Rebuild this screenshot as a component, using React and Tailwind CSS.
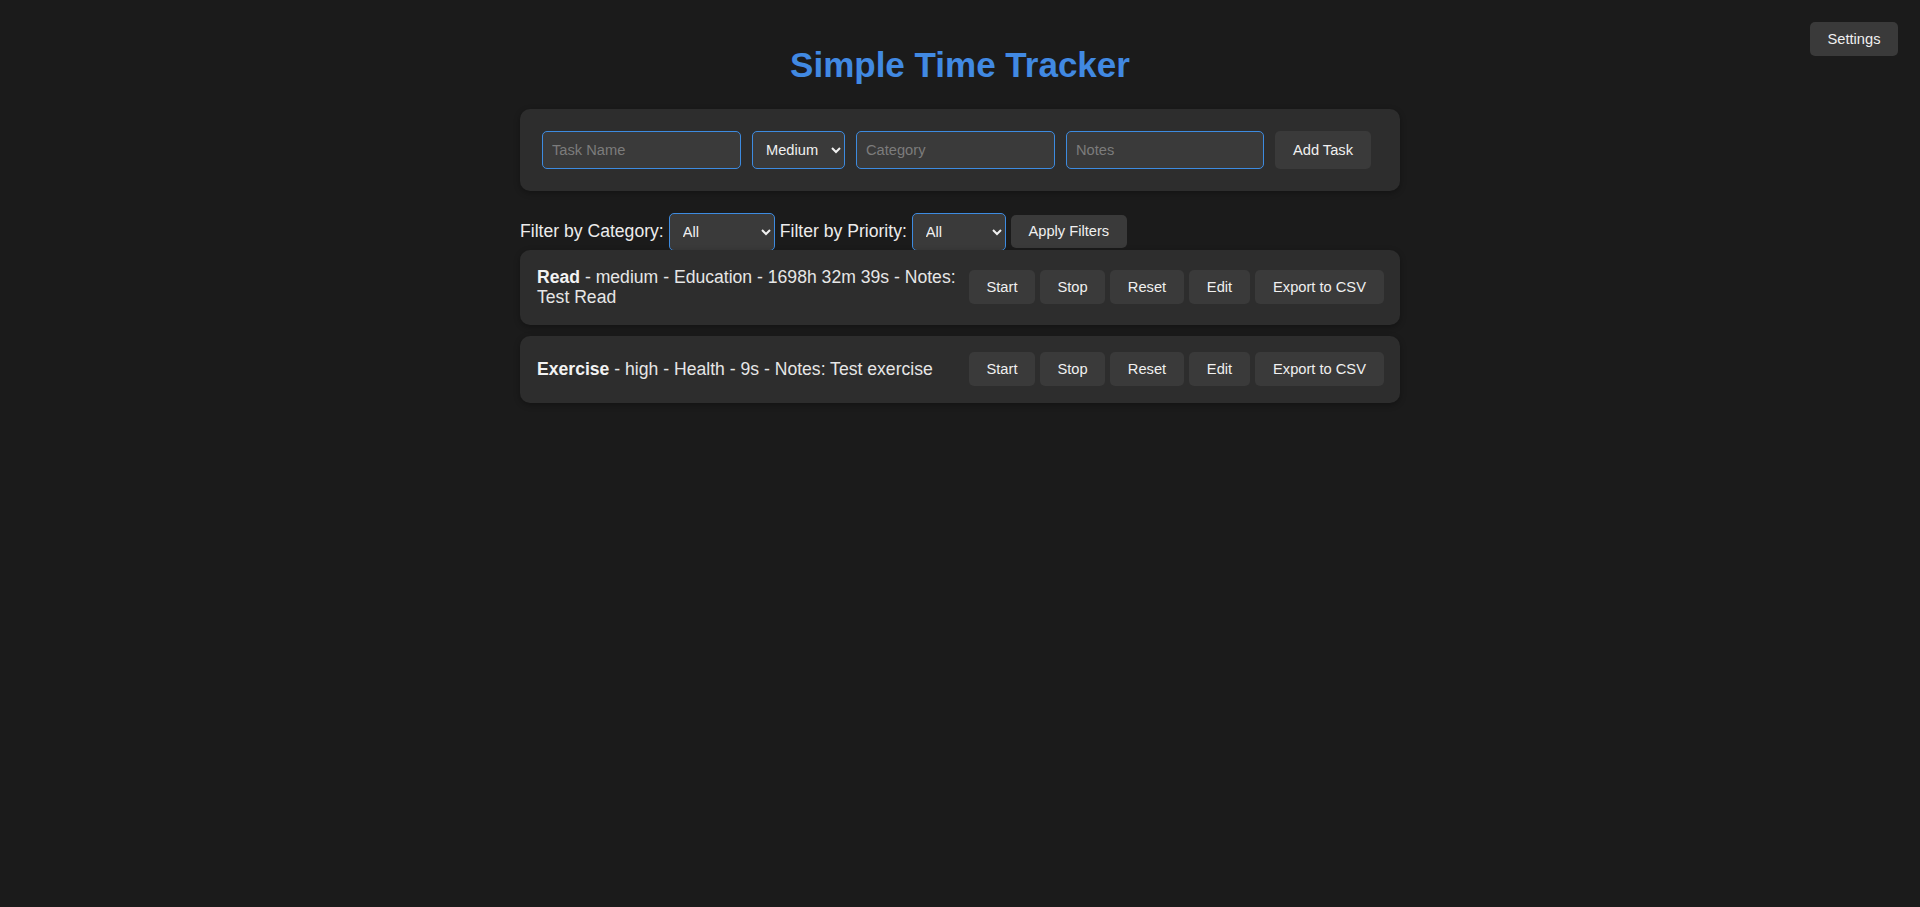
import React, { useState } from "react";

const tasks = [
  { name: "Read", priority: "medium", category: "Education", time: "1698h 32m 39s", notes: "Test Read" },
  { name: "Exercise", priority: "high", category: "Health", time: "9s", notes: "Test exercise" },
];

const btn =
  "bg-[#3a3a3a] text-[#f0f0f0] rounded-[5px] text-[14.67px] leading-none text-center cursor-pointer shrink-0 hover:bg-[#454545]";

const field =
  "h-[38px] bg-[#3a3a3a] text-[#f0f0f0] border border-[#3d8be0] rounded-[5px] px-[9px] text-[14.67px] outline-none placeholder:text-[#7c7c7c]";

const App = () => {
  const [priority, setPriority] = useState("medium");

  return (
    <div className="relative min-h-screen bg-[#1b1b1b] text-[#e6e6e6] font-['Liberation_Sans',Arial,sans-serif]">
      <button className={`${btn} absolute top-[22px] right-[22px] h-[34px] w-[88px]`}>Settings</button>

      <div className="w-[880px] mx-auto pt-[45px]">
        <h1 className="text-center text-[35px] leading-[40px] font-bold text-[#4189e2] mb-[24px]">
          Simple Time Tracker
        </h1>

        <div className="flex gap-[11px] bg-[#2d2d2d] rounded-[10px] p-[22px] shadow-[0_2px_6px_rgba(0,0,0,0.3)]">
          <input className={`${field} w-[199px]`} placeholder="Task Name" />
          <select
            value={priority}
            onChange={(e) => setPriority(e.target.value)}
            className={`${field} w-[93px]`}
          >
            <option value="low">Low</option>
            <option value="medium">Medium</option>
            <option value="high">High</option>
          </select>
          <input className={`${field} w-[199px]`} placeholder="Category" />
          <input className={`${field} w-[198px]`} placeholder="Notes" />
          <button className={`${btn} h-[38px] w-[96px]`}>Add Task</button>
        </div>

        <div className="mt-[22px] h-[37px] flex items-center gap-[5px] text-[17.6px] text-[#ececec]">
          <span>Filter by Category:</span>
          <select className={`${field} h-[37px] w-[106px]`}>
            <option>All</option>
            <option>Education</option>
            <option>Health</option>
          </select>
          <span>Filter by Priority:</span>
          <select className={`${field} h-[37px] w-[94px]`}>
            <option>All</option>
            <option>Low</option>
            <option>Medium</option>
            <option>High</option>
          </select>
          <button className={`${btn} h-[33px] w-[116px]`}>Apply Filters</button>
        </div>

        <div className="flex flex-col gap-[11px]">
          {tasks.map((t) => (
            <div
              key={t.name}
              className="flex items-center bg-[#2d2d2d] rounded-[10px] pl-[17px] pr-[16px] py-[16.5px] shadow-[0_2px_6px_rgba(0,0,0,0.3)]"
            >
              <div className="flex-1 text-[17.6px] leading-[20.8px] text-[#e6e6e6]">
                <strong className="text-[#f2f2f2]">{t.name}</strong> - {t.priority} - {t.category} - {t.time} - Notes:{" "}
                {t.notes}
              </div>
              <div className="flex gap-[5px] ml-[5px]">
                <button className={`${btn} h-[34px] w-[66px]`}>Start</button>
                <button className={`${btn} h-[34px] w-[65px]`}>Stop</button>
                <button className={`${btn} h-[34px] w-[74px]`}>Reset</button>
                <button className={`${btn} h-[34px] w-[61px]`}>Edit</button>
                <button className={`${btn} h-[34px] w-[129px]`}>Export to CSV</button>
              </div>
            </div>
          ))}
        </div>
      </div>
    </div>
  );
};

export default App;
